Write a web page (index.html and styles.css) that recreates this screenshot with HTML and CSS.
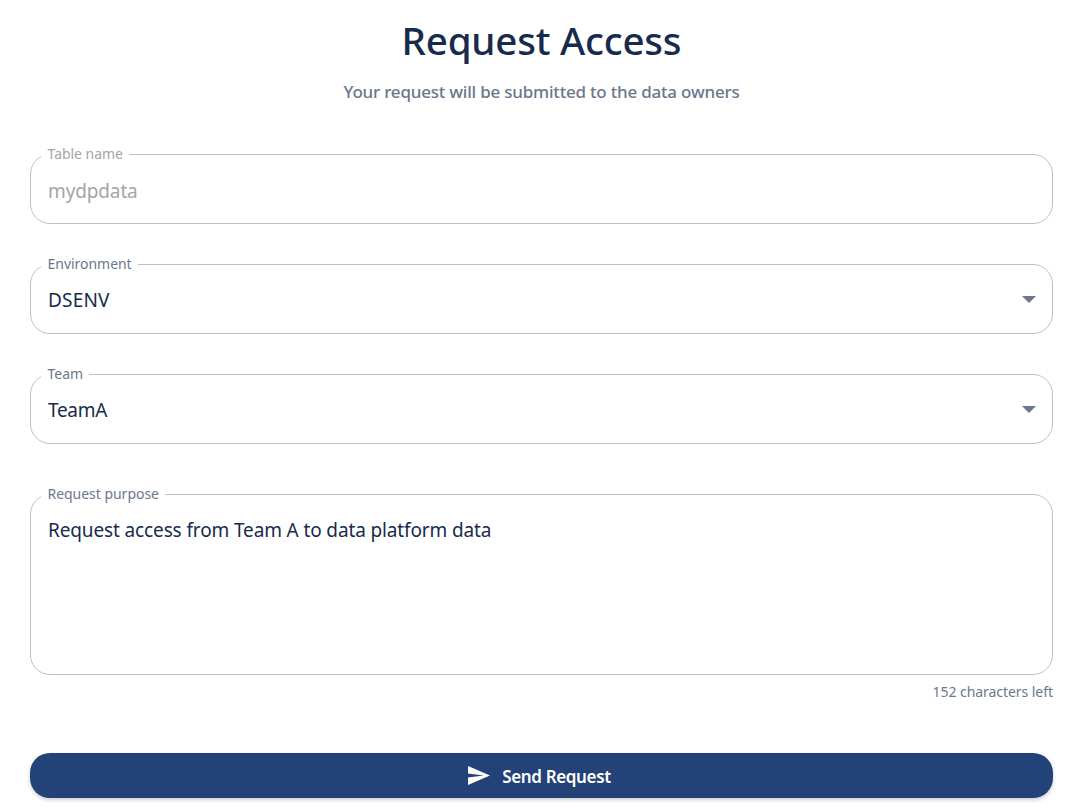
FILE: index.html
```html
<!DOCTYPE html>
<html lang="en">
<head>
<meta charset="utf-8">
<title>Request Access</title>
<link rel="stylesheet" href="styles.css">
</head>
<body>
<main class="page">
  <h1 class="title">Request Access</h1>
  <p class="subtitle">Your request will be submitted to the data owners</p>
  <form class="form">
    <fieldset class="field disabled">
      <legend class="label">Table name</legend>
      <div class="value">mydpdata</div>
    </fieldset>
    <fieldset class="field">
      <legend class="label">Environment</legend>
      <div class="value value-env">DSENV</div>
      <svg class="arrow" viewBox="0 0 14 7"><path d="M0 0h14L7 7z"/></svg>
    </fieldset>
    <fieldset class="field">
      <legend class="label">Team</legend>
      <div class="value value-team">TeamA</div>
      <svg class="arrow" viewBox="0 0 14 7"><path d="M0 0h14L7 7z"/></svg>
    </fieldset>
    <fieldset class="field purpose">
      <legend class="label">Request purpose</legend>
      <div class="value">Request access from Team A to data platform data</div>
    </fieldset>
    <p class="counter">152 characters left</p>
    <button class="send" type="button">
      <svg class="plane" viewBox="2 3 21 18"><path d="M2.01 21 23 12 2.01 3 2 10l15 2-15 2z"/></svg>
      <span class="send-text">Send Request</span>
    </button>
  </form>
</main>
</body>
</html>
```
FILE: styles.css
```css
* { box-sizing: border-box; }
body { margin: 0; background: #fff; color: #172b4d; font-family: "Noto Sans", "Open Sans", sans-serif; }
.page { height: 811px; padding: 12px 21px 0 30px; overflow: hidden; }
.title { margin: 0; height: 56px; line-height: 56px; text-align: center; font-size: 38.5px; font-weight: 500; letter-spacing: -.2px; }
.subtitle { margin: 10px 0 0; height: 28px; line-height: 28px; text-align: center; font-size: 17px; font-weight: 500; color: #6b778c; letter-spacing: -.21px; }
.form { margin-top: 37px; }
.field { display: flex; justify-content: space-between; align-items: center; min-width: 0; height: 81px; margin: 0 0 29px; padding: 0 16px 9px 17px; border: 1px solid #c1c1c1; border-radius: 20px; }
.label { height: 22px; margin-left: -7px; padding: 0 6px 0 6.5px; line-height: 22px; font-size: 14px; letter-spacing: -.03px; color: #6b778c; white-space: nowrap; }
.value { line-height: 28px; font-size: 19px; letter-spacing: -.13px; white-space: nowrap; }
.value-env { letter-spacing: .2px; }
.value-team { letter-spacing: -.3px; }
.disabled .label, .disabled .value { color: #a5a5a5; }
.disabled { padding-bottom: 7px; }
.arrow { width: 14px; height: 7px; fill: #6b778c; }
.purpose { height: 192px; margin: 39px 0 3px; padding-top: 11px; align-items: flex-start; }
.counter { margin: 0; height: 28px; line-height: 28px; text-align: right; font-size: 14px; letter-spacing: -.05px; color: #6b778c; }
.send { display: flex; align-items: center; justify-content: center; gap: 12px; width: 100%; height: 45px; margin-top: 47px; padding: 0 10px 0 6px; border: 0; border-radius: 20px; background: #234277; color: #fff; box-shadow: 0 2px 4px #0003; font: 600 17px "Noto Sans", sans-serif; letter-spacing: -.35px; }
.send-text { padding-top: 2px; }
.plane { width: 22px; height: 19px; fill: #fff; }
```
